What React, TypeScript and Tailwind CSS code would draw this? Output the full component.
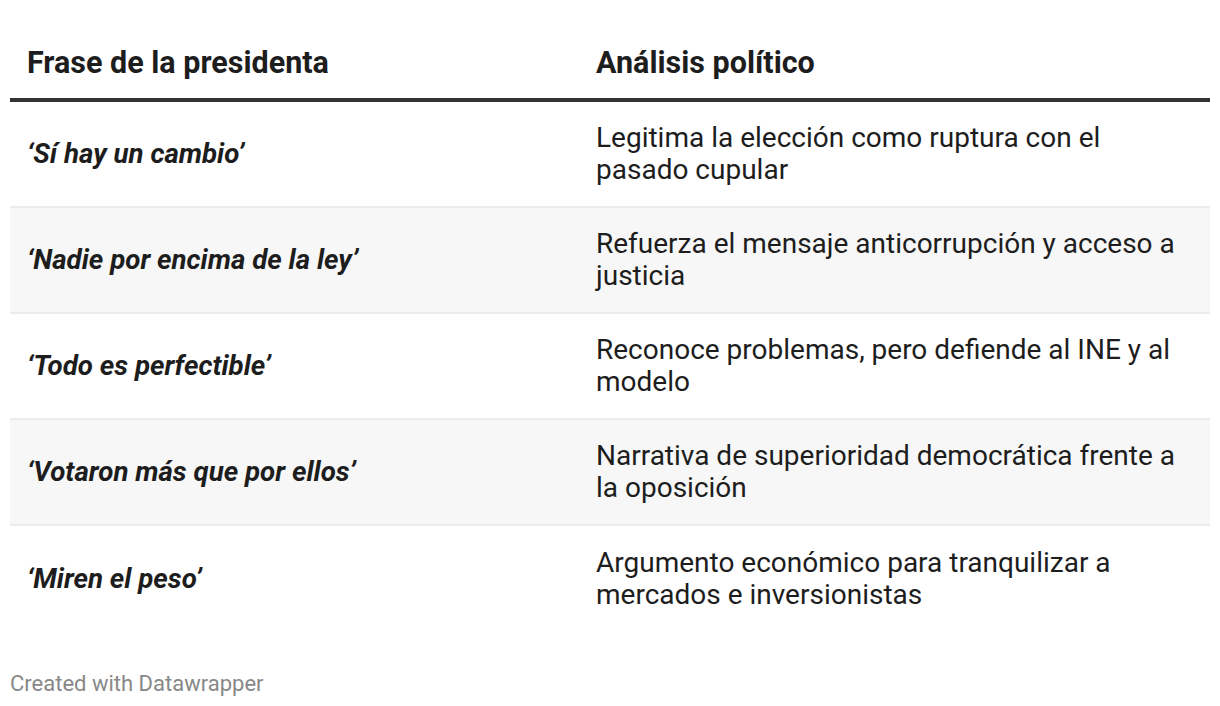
import React from "react";

const rows = [
  ["‘Sí hay un cambio’", "Legitima la elección como ruptura con el pasado cupular"],
  ["‘Nadie por encima de la ley’", "Refuerza el mensaje anticorrupción y acceso a justicia"],
  ["‘Todo es perfectible’", "Reconoce problemas, pero defiende al INE y al modelo"],
  ["‘Votaron más que por ellos’", "Narrativa de superioridad democrática frente a la oposición"],
  ["‘Miren el peso’", "Argumento económico para tranquilizar a mercados e inversionistas"],
];

export default function App() {
  return (
    <div className="w-[1220px] h-[706px] bg-white px-[10px] pt-[44px]" style={{ fontFamily: "Roboto, 'Noto Sans', sans-serif" }}>
      <div className="flex border-b-[4px] border-[#333333] pb-[16px]">
        <div className="w-[570px] pl-[17px] text-[30.5px] leading-[38px] font-bold text-[#1d1d1d]">Frase de la presidenta</div>
        <div className="flex-1 pl-[16px] text-[30.5px] leading-[38px] font-bold text-[#1d1d1d]">Análisis político</div>
      </div>
      {rows.map((r, i) => (
        <div key={i} className={`flex items-center h-[106px] ${i < rows.length - 1 ? "border-b-2 border-[#ececec]" : ""} ${i % 2 === 1 ? "bg-[#f7f7f7]" : "bg-white"}`}>
          <div className="w-[570px] pl-[17px] text-[27.7px] font-bold italic text-[#1d1d1d]">{r[0]}</div>
          <div className="flex-1 pl-[16px] pr-[22px] text-[28px] leading-[32px] text-[#1d1d1d]">{r[1]}</div>
        </div>
      ))}
      <div className="mt-[35px] text-[22px] text-[#888888]">Created with Datawrapper</div>
    </div>
  );
}
